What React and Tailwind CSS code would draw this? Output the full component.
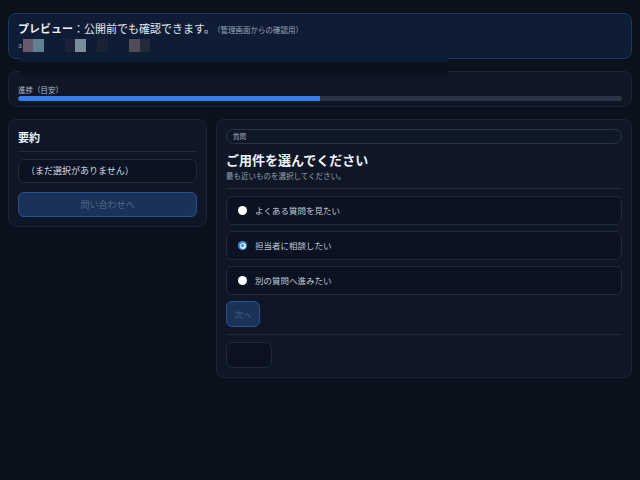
import { useState } from 'react'

const options = [
  { id: 'faq', label: 'よくある質問を見たい' },
  { id: 'staff', label: '担当者に相談したい' },
  { id: 'other', label: '別の質問へ進みたい' },
]

// mosaic blocks shown in the banner's second line
const mosaic = [
  { w: 10, c: 'bg-[#6a5a6c]' },
  { w: 11, c: 'bg-[#5f8090]' },
  { w: 21, c: 'bg-transparent' },
  { w: 10, c: 'bg-[#1a2438]' },
  { w: 11, c: 'bg-[#7b8d9a]' },
  { w: 11, c: 'bg-transparent' },
  { w: 11, c: 'bg-[#1a2336]' },
  { w: 21, c: 'bg-transparent' },
  { w: 11, c: 'bg-[#4f4b59]' },
  { w: 10, c: 'bg-[#222a3b]' },
]

function Radio({ checked }) {
  if (checked) {
    return (
      <span className="w-[9px] h-[9px] rounded-full bg-[#3b8cf0] flex items-center justify-center shrink-0">
        <span className="w-[6px] h-[6px] rounded-full bg-[#dbe7f7] flex items-center justify-center">
          <span className="w-[3px] h-[3px] rounded-full bg-[#3b8cf0]" />
        </span>
      </span>
    )
  }
  return <span className="w-[9px] h-[9px] rounded-full bg-white shrink-0" />
}

export default function App() {
  const [selected, setSelected] = useState('staff')

  return (
    <div
      className="min-h-[480px] w-[640px] bg-[#0b111d] text-[#cbd3df] relative"
      style={{ fontFamily: '"Noto Sans CJK JP", "Noto Sans", sans-serif' }}
    >
      <div className="px-2 pt-[13px] flex flex-col gap-3">
        {/* Preview banner */}
        <div className="h-[46px] rounded-lg border border-[#1d3861] bg-[#0f1c36] px-[9px] pt-[6px]">
          <div className="flex items-baseline leading-[16px]">
            <span className="text-[11px] font-bold text-[#eef2f8]">プレビュー</span>
            <span className="text-[11px] text-[#e3e8f0]">：公開前でも確認できます。</span>
            <span className="text-[7.5px] text-[#9aa6b8] -ml-[2px]">（管理画面からの確認用）</span>
          </div>
          <div className="flex items-center h-[13px] mt-[1px]">
            <span className="text-[7px] text-[#8a95a8] mr-[1px]">a</span>
            {mosaic.map((m, i) => (
              <span key={i} className={`h-[13px] ${m.c}`} style={{ width: m.w }} />
            ))}
          </div>
        </div>

        {/* Progress */}
        <div className="h-[36px] rounded-lg border border-[#1b2536] bg-[#0f1727] px-[9px] pt-[13px]">
          <div className="text-[7.5px] leading-[10px] text-[#b3bdcb]">進捗（目安）</div>
          <div className="mt-[1px] h-[5px] rounded-full bg-[#2a3444] overflow-hidden">
            <div className="h-full bg-[#3a7de6] rounded-l-full" style={{ width: '50%' }} />
          </div>
        </div>

        {/* Main row */}
        <div className="grid grid-cols-[199px_416px] gap-[9px] items-start">
          {/* Summary */}
          <div className="rounded-lg border border-[#1b2536] bg-[#0f1727] px-[9px] pt-[9px] pb-[9px]">
            <div className="text-[11px] font-bold leading-[16px] text-[#eef2f8] pb-[6px] border-b border-[#1e293a]">要約</div>
            <div className="mt-[7px] h-[24px] rounded-md border border-[#1f2a3c] bg-[#0b1322] flex items-center px-[7px] text-[9px] text-[#d5dce6]">
              （まだ選択がありません）
            </div>
            <button className="block mt-[9px] w-full h-[25px] rounded-md border border-[#2a5193] bg-[#1a3158] text-[9px] text-[#54698a]">
              問い合わせへ
            </button>
          </div>

          {/* Question */}
          <div className="rounded-lg border border-[#1b2536] bg-[#0f1727] px-[9px] pt-[9px] pb-[9px]">
            <div className="h-[15px] rounded-full border border-[#263246] flex items-center px-[6px] text-[6.5px] text-[#a7b1c0]">
              質問
            </div>
            <div className="mt-[7px] text-[13px] font-bold leading-[18px] text-[#eef2f8]">ご用件を選んでください</div>
            <div className="mt-[1px] text-[7.5px] leading-[12px] text-[#98a3b3]">最も近いものを選択してください。</div>
            <div className="mt-[6px] border-t border-[#1e293a]" />
            <div className="mt-[7px] flex flex-col gap-[6px]">
              {options.map(o => (
                <button
                  key={o.id}
                  onClick={() => setSelected(o.id)}
                  className="h-[29px] rounded-md border border-[#1f2a3c] bg-[#0b1322] flex items-center gap-[8px] pl-[11px] text-left"
                >
                  <Radio checked={selected === o.id} />
                  <span className="text-[8.5px] text-[#c3cbd7]">{o.label}</span>
                </button>
              ))}
            </div>
            <button className="block mt-[6px] w-[34px] h-[26px] rounded-md border border-[#2a5193] bg-[#1a3158] text-[8.5px] text-[#4a5e7e]">
              次へ
            </button>
            <div className="mt-[7px] border-t border-[#1e293a]" />
            <button className="block mt-[7px] w-[46px] h-[26px] rounded-md border border-[#1f2a3c] bg-[#0b1322]" />
          </div>
        </div>
      </div>

      {/* shifted strip over the banner bottom */}
      <div className="absolute left-[20px] top-[57px] w-[428px] h-[5px] bg-[#0f1c36]" />
      <div className="absolute left-[20px] top-[62px] w-[428px] h-[13px] bg-[#0b111d]" />
    </div>
  )
}
